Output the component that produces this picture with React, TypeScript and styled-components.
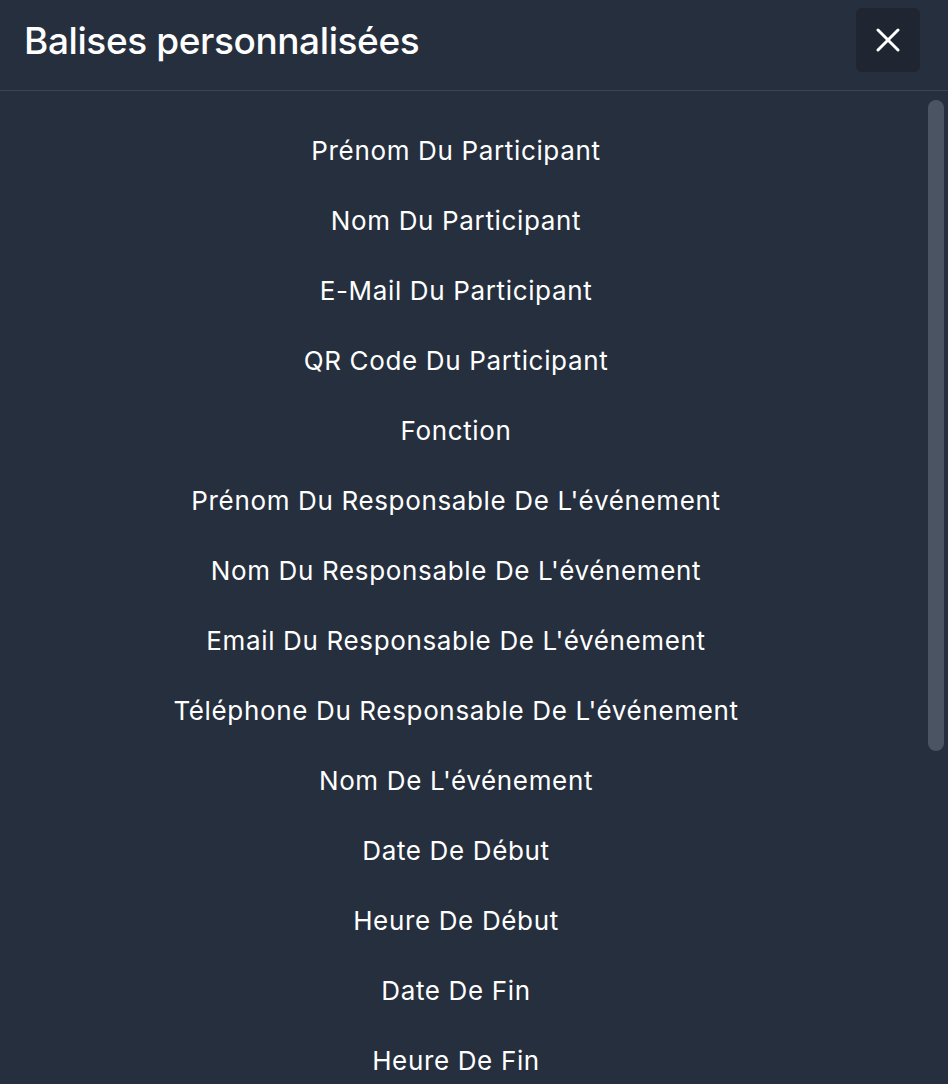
import styled, { createGlobalStyle } from 'styled-components';

const tags = [
  'Prénom Du Participant',
  'Nom Du Participant',
  'E-Mail Du Participant',
  'QR Code Du Participant',
  'Fonction',
  "Prénom Du Responsable De L'événement",
  "Nom Du Responsable De L'événement",
  "Email Du Responsable De L'événement",
  "Téléphone Du Responsable De L'événement",
  "Nom De L'événement",
  'Date De Début',
  'Heure De Début',
  'Date De Fin',
  'Heure De Fin',
];

const GlobalStyle = createGlobalStyle`
  html, body {
    margin: 0;
    padding: 0;
    background: #262f3e;
    font-family: Inter, "Noto Sans", "Liberation Sans", sans-serif;
    color: #ffffff;
  }
`;

export default function App() {
  return (
    <>
      <GlobalStyle />
      <SPanel>
        <SHeader>
          <STitle>Balises personnalisées</STitle>
          <SCloseButton aria-label="Fermer">
            <svg width="24" height="24" viewBox="0 0 24 24" fill="none">
              <path d="M2 2L22 22M22 2L2 22" stroke="#fff" strokeWidth="3" strokeLinecap="round" />
            </svg>
          </SCloseButton>
        </SHeader>
        <SBody>
          <SList>
            {tags.map((tag) => (
              <STag key={tag}>{tag}</STag>
            ))}
          </SList>
          {/* barre de défilement */}
          <SThumb />
        </SBody>
      </SPanel>
    </>
  );
}

const SPanel = styled.div`
  height: 1084px;
  display: flex;
  flex-direction: column;
  background: #262f3e;
  overflow: hidden;
`;

const SHeader = styled.div`
  display: flex;
  justify-content: space-between;
  align-items: center;
  padding: 8px 28px 18px 24px;
  border-bottom: 1px solid #3c4554;
  flex-shrink: 0;
`;

const STitle = styled.h2`
  margin: 0;
  font-size: 37px;
  font-weight: 500;
  letter-spacing: -0.4px;
`;

const SCloseButton = styled.button`
  width: 64px;
  height: 64px;
  border: none;
  border-radius: 6px;
  background: #1f2531;
  display: flex;
  align-items: center;
  justify-content: center;
  padding: 0;
  cursor: pointer;
`;

const SBody = styled.div`
  position: relative;
  flex: 1;
  overflow: hidden;
`;

const SList = styled.div`
  padding: 24px 36px 0 0;
`;

const STag = styled.div`
  height: 70px;
  display: flex;
  align-items: center;
  justify-content: center;
  font-size: 26px;
  font-weight: 400;
  letter-spacing: 0.65px;
`;

const SThumb = styled.div`
  position: absolute;
  top: 9px;
  right: 4px;
  width: 16px;
  height: 651px;
  border-radius: 8px;
  background: #4b5462;
`;
